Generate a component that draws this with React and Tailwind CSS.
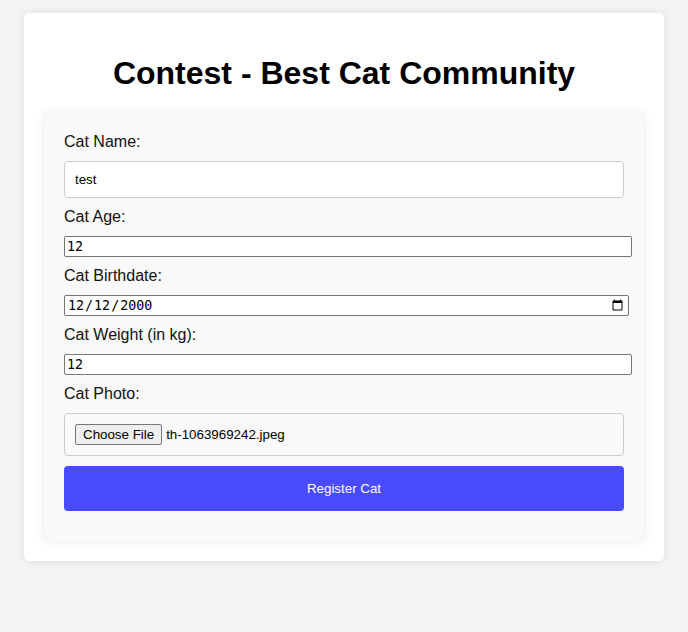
import React from 'react';

const labelCls = "block mb-[10px] text-[16px] leading-[18px] text-[#111]";
const plainInput =
  "block mb-[10px] h-[21px] px-[2px] py-[1px] bg-white border border-[#767676] rounded-[2px] text-[13.33px] text-black font-['DejaVu_Sans_Mono',monospace] outline-none";

export default function App() {
  return (
    <div className="min-h-[632px] bg-[#f4f4f4] pt-[13px] font-['Liberation_Sans',Arial,sans-serif]">
      <div className="mx-auto w-[640px] bg-white rounded-[5px] shadow-[0_0_10px_rgba(0,0,0,0.1)] p-5">
        <h1 className="text-center text-[32px] leading-[38px] font-bold text-black my-[21px]">
          Contest - Best Cat Community
        </h1>

        <form
          onSubmit={(e) => e.preventDefault()}
          className="bg-[#f9f9f9] rounded-[5px] shadow-[0_0_10px_rgba(0,0,0,0.1)] p-5"
        >
          <label className={labelCls}>Cat Name:</label>
          <input
            type="text"
            defaultValue="test"
            className="block mb-[10px] w-full h-[37px] px-[10px] bg-white border border-[#ccc] rounded-[4px] text-[13.33px] text-black outline-none"
          />

          <label className={labelCls}>Cat Age:</label>
          <input type="number" defaultValue="12" className={`${plainInput} w-[568px]`} />

          <label className={labelCls}>Cat Birthdate:</label>
          <input type="date" defaultValue="2000-12-12" className={`${plainInput} w-[565px]`} />

          <label className={labelCls}>Cat Weight (in kg):</label>
          <input type="number" defaultValue="12" className={`${plainInput} w-[568px]`} />

          <label className={labelCls}>Cat Photo:</label>
          <div className="mb-[10px] h-[43px] flex items-center px-[10px] border border-[#ccc] rounded-[4px] text-[13.33px] text-black">
            <button
              type="button"
              className="h-[21px] px-[7px] bg-[#efefef] border border-[#767676] rounded-[2px] text-[13.33px] leading-none text-black"
            >
              Choose File
            </button>
            <span className="ml-[4px]">th-1063969242.jpeg</span>
          </div>

          <button
            type="submit"
            className="block mb-[10px] w-full h-[45px] bg-[#4a4aff] text-white text-[13.33px] rounded-[4px]"
          >
            Register Cat
          </button>
        </form>
      </div>
    </div>
  );
}
